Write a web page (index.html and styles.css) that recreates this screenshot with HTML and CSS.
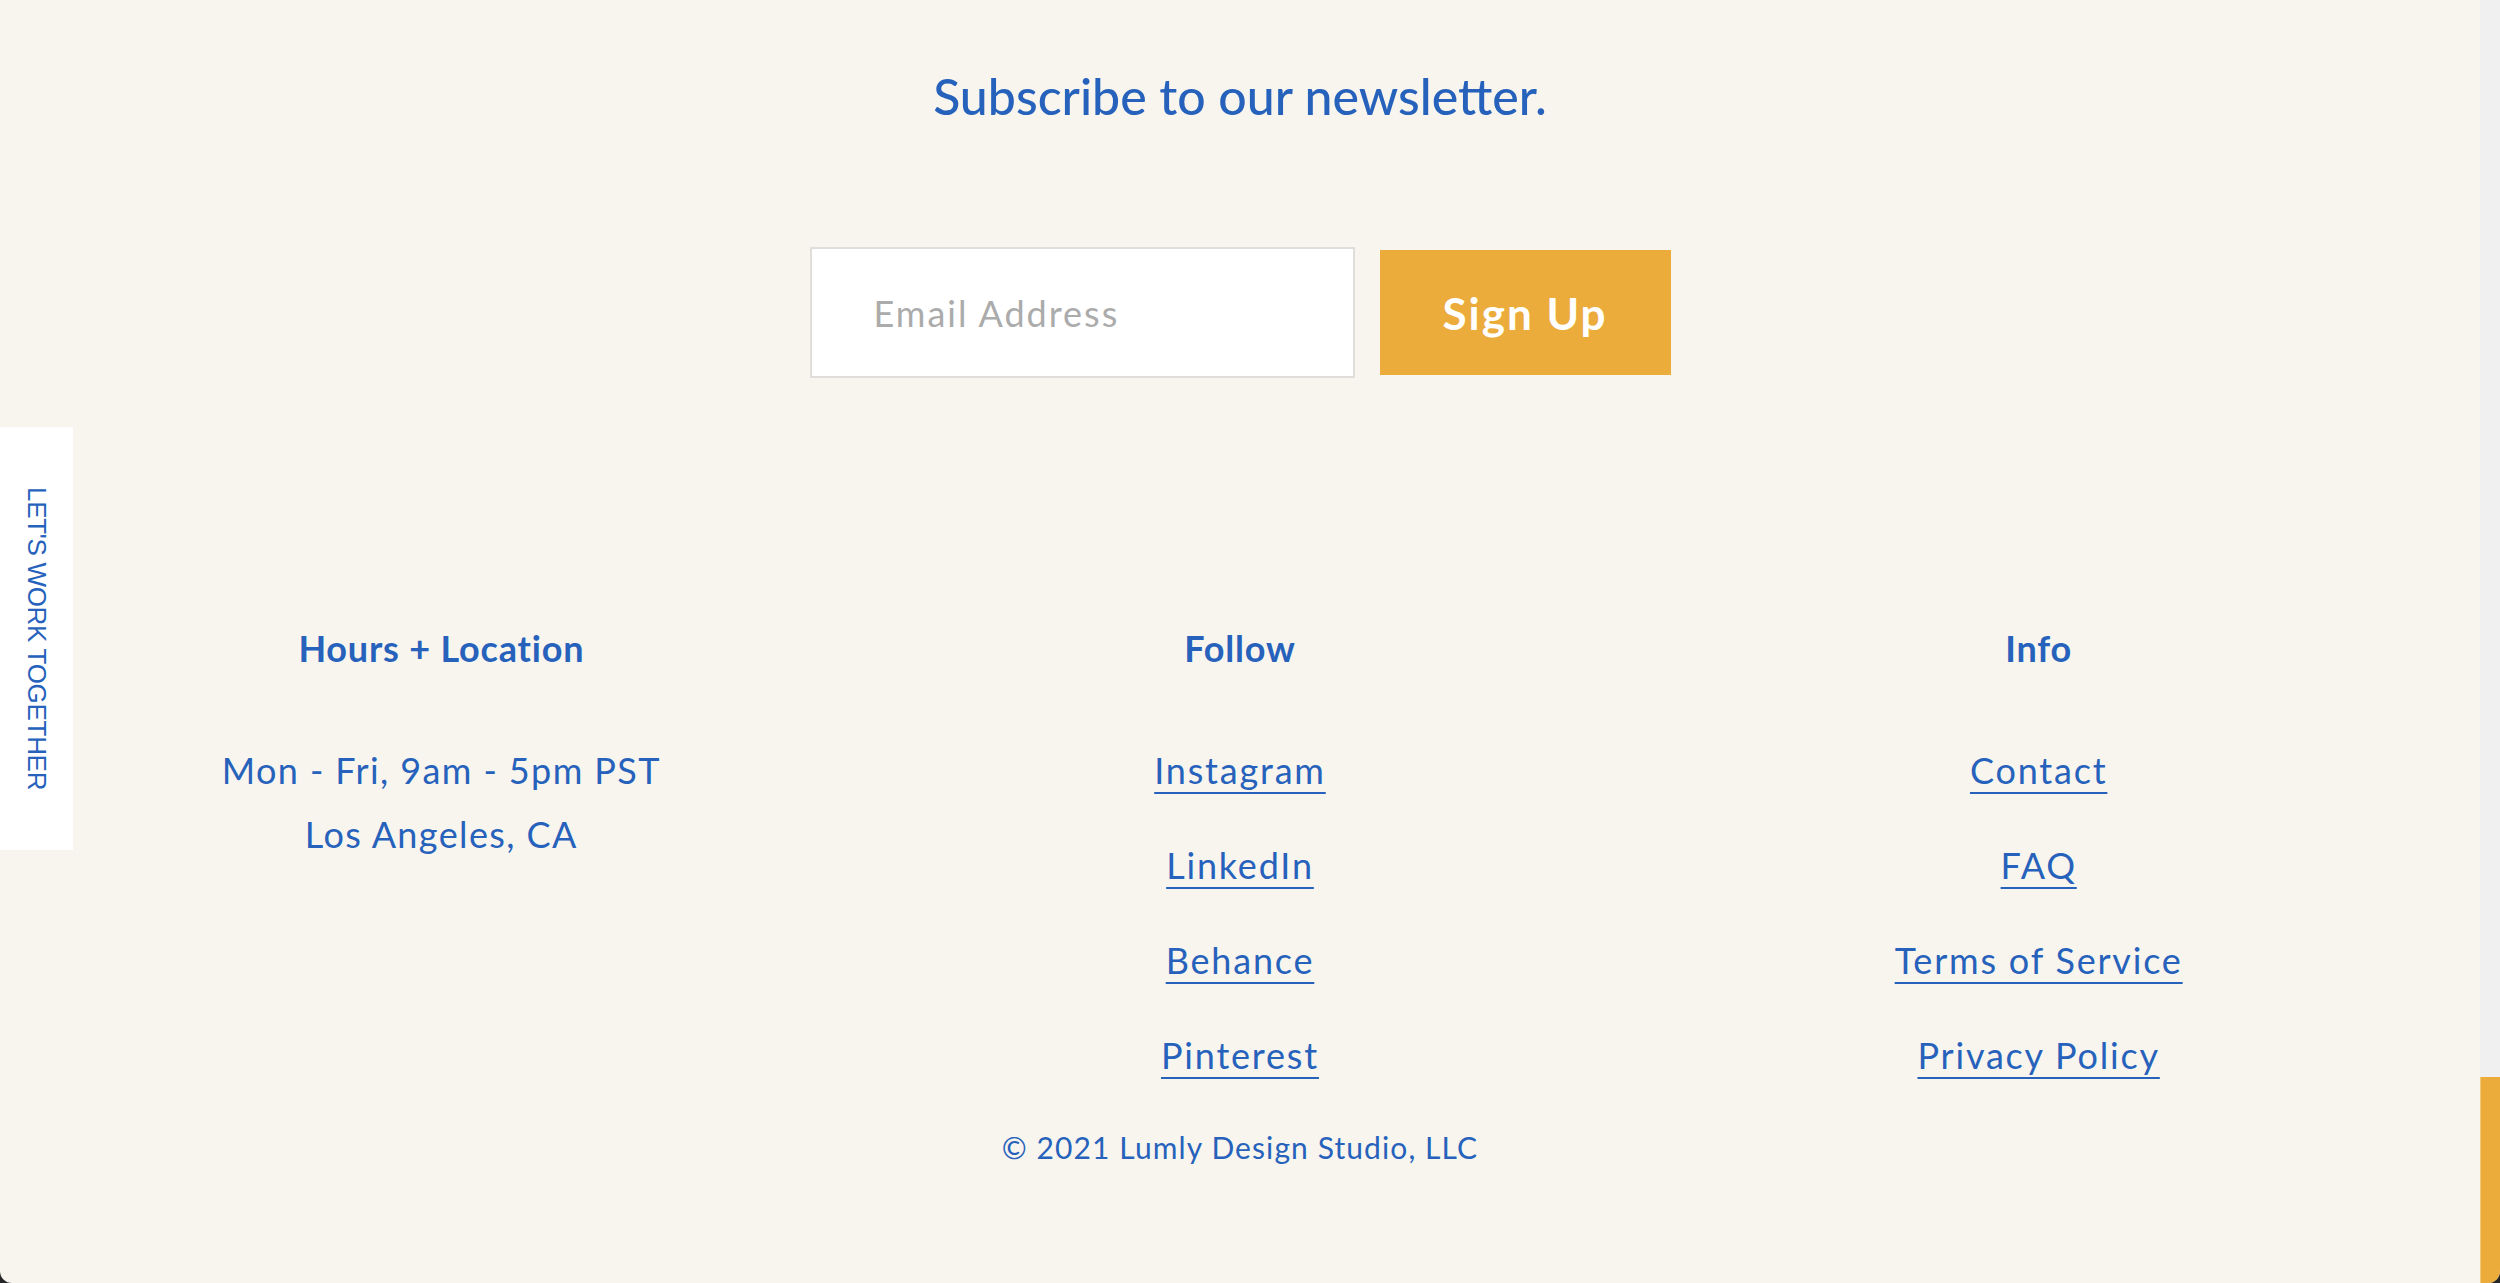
FILE: index.html
```html
<!DOCTYPE html>
<html lang="en">
<head>
<meta charset="utf-8">
<title>Lumly Design Studio – Footer</title>
<link rel="stylesheet" href="styles.css">
</head>
<body>
<div class="window">
  <main class="page">
    <a class="side-tab" href="#"><span>LET'S WORK TOGETHER</span></a>

    <section class="newsletter">
      <h2 class="newsletter-title">Subscribe to our newsletter.</h2>
      <form class="newsletter-form">
        <input class="email" type="email" placeholder="Email Address">
        <button class="signup" type="button">Sign Up</button>
      </form>
    </section>

    <section class="columns">
      <div class="col">
        <h3 class="col-title">Hours + Location</h3>
        <p class="col-text">Mon - Fri, 9am - 5pm PST<br>Los Angeles, CA</p>
      </div>
      <div class="col">
        <h3 class="col-title">Follow</h3>
        <ul class="links">
          <li><a href="#">Instagram</a></li>
          <li><a href="#">LinkedIn</a></li>
          <li><a href="#">Behance</a></li>
          <li><a href="#">Pinterest</a></li>
        </ul>
      </div>
      <div class="col">
        <h3 class="col-title">Info</h3>
        <ul class="links">
          <li><a href="#">Contact</a></li>
          <li><a href="#">FAQ</a></li>
          <li><a href="#">Terms of Service</a></li>
          <li><a href="#">Privacy Policy</a></li>
        </ul>
      </div>
    </section>

    <p class="copyright">© 2021 Lumly Design Studio, LLC</p>
  </main>
  <div class="scrollbar"><div class="thumb"></div></div>
</div>
</body>
</html>
```

FILE: styles.css
```css
html {
  background: #262626;
}
body {
  margin: 0;
  font-family: Lato, "Open Sans", sans-serif;
  color: #2662bb;
}
.window {
  display: flex;
  height: 1283px;
  overflow: hidden;
  border-radius: 0 0 12px 12px;
}
.page {
  flex: 1;
  position: relative;
  background: #f8f5ef;
}
.scrollbar {
  width: 20px;
  background: #f0f0f0;
  display: flex;
  flex-direction: column;
  justify-content: flex-end;
}
.thumb {
  height: 206px;
  background: #ebac3c;
  border-left: 1px solid #f3c878;
}

/* side tab */
.side-tab {
  position: absolute;
  left: 0;
  top: 427px;
  width: 73px;
  height: 423px;
  background: #ffffff;
  display: flex;
  align-items: center;
  justify-content: center;
  text-decoration: none;
  color: #2662bb;
}
.side-tab span {
  writing-mode: vertical-rl;
  font-family: "Liberation Sans", Arial, sans-serif;
  font-size: 26px;
  letter-spacing: -0.3px;
  line-height: 1;
}

/* newsletter */
.newsletter {
  padding-top: 66px;
  display: flex;
  flex-direction: column;
  align-items: center;
}
.newsletter-title {
  margin: 0;
  font-size: 50px;
  font-weight: 500;
  line-height: 60px;
}
.newsletter-form {
  margin: 121px 0 0;
  display: flex;
  align-items: center;
  gap: 25px;
}
.email {
  box-sizing: border-box;
  width: 545px;
  height: 131px;
  border: 2px solid #e0dedb;
  background: #ffffff;
  padding: 0 0 0 62px;
  font-family: Lato, sans-serif;
  font-size: 36px;
  letter-spacing: 2px;
  color: #444;
  outline: none;
}
.email::placeholder {
  color: #ababab;
}
.signup {
  width: 291px;
  height: 125px;
  border: 0;
  background: #ebac3c;
  color: #ffffff;
  font-family: Lato, sans-serif;
  font-weight: 700;
  font-size: 44px;
  letter-spacing: 2px;
  padding: 0;
}

/* columns */
.columns {
  display: grid;
  grid-template-columns: repeat(3, 1fr);
  padding: 0 42px;
  margin-top: 249px;
  text-align: center;
}
.col-title {
  margin: 0;
  font-size: 36px;
  font-weight: 700;
  line-height: 43px;
  letter-spacing: 0.8px;
}
.col-text {
  margin: 68px 0 0;
  font-size: 36px;
  line-height: 64px;
  letter-spacing: 1.4px;
}
.links {
  list-style: none;
  margin: 68px 0 0;
  padding: 0;
  display: flex;
  flex-direction: column;
  gap: 31px;
}
.links li {
  font-size: 36px;
  line-height: 64px;
  letter-spacing: 1.8px;
}
.links a {
  color: #2662bb;
  text-decoration: underline;
  text-decoration-thickness: 2px;
  text-underline-offset: 8px;
}

.copyright {
  margin: 40px 0 0;
  text-align: center;
  font-size: 30px;
  line-height: 40px;
  letter-spacing: 1.1px;
}
```
